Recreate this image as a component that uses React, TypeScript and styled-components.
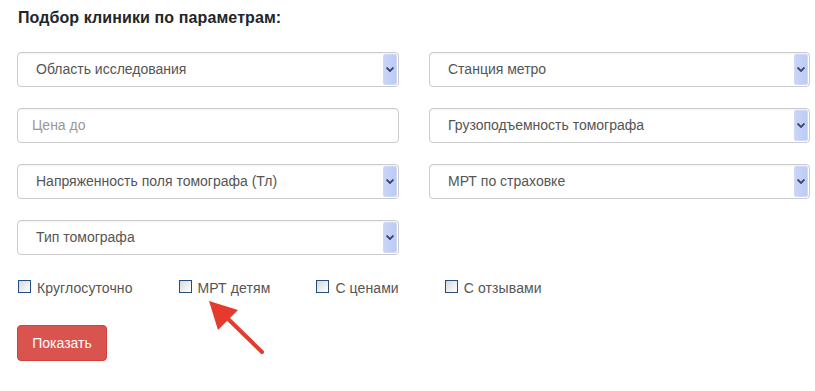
import styled, { createGlobalStyle } from 'styled-components'

const GlobalStyle = createGlobalStyle`
  html, body {
    margin: 0;
    padding: 0;
    background: #ffffff;
  }
  body {
    font-family: "Liberation Sans", Arial, sans-serif;
  }
`

const leftFields = [
  { label: 'Область исследования', kind: 'select' },
  { label: 'Станция метро', kind: 'select' },
  { label: 'Цена до', kind: 'input' },
  { label: 'Грузоподъемность томографа', kind: 'select' },
  { label: 'Напряженность поля томографа (Тл)', kind: 'select' },
  { label: 'МРТ по страховке', kind: 'select' },
  { label: 'Тип томографа', kind: 'select' },
]

const options = ['Круглосуточно', 'МРТ детям', 'С ценами', 'С отзывами']

// ─── Component ────────────────────────────────────────────────────────────────

export default function App() {
  return (
    <>
      <GlobalStyle />
      <Page>
        <Title>Подбор клиники по параметрам:</Title>

        <FieldGrid>
          {leftFields.map((f) =>
            f.kind === 'input' ? (
              <TextField key={f.label}>{f.label}</TextField>
            ) : (
              <SelectBox key={f.label}>
                <SelectText>{f.label}</SelectText>
                <ArrowButton>
                  <svg width="8" height="5" viewBox="0 0 8 5">
                    <path d="M0.5 0.5 L4 4 L7.5 0.5" fill="none" stroke="#3a4666" strokeWidth="1.8" />
                  </svg>
                </ArrowButton>
              </SelectBox>
            )
          )}
        </FieldGrid>

        <CheckRow>
          {options.map((o) => (
            <CheckItem key={o}>
              <CheckBox />
              <CheckLabel>{o}</CheckLabel>
            </CheckItem>
          ))}
        </CheckRow>

        <ShowButton>Показать</ShowButton>

        <Pointer width="70" height="65" viewBox="0 0 70 65">
          <line x1="62" y1="57" x2="22" y2="18" stroke="#e53b2f" strokeWidth="4" strokeLinecap="round" />
          <polygon points="9,6 38,15 18,35" fill="#e53b2f" />
        </Pointer>
      </Page>
    </>
  )
}

// ─── Styles ───────────────────────────────────────────────────────────────────

const Page = styled.div`
  position: relative;
  width: 793px;
  padding: 8px 0 30px 17px;
  color: #555555;
`

const Title = styled.h3`
  margin: 0 0 24px 1px;
  font-size: 16px;
  line-height: 20px;
  font-weight: bold;
  letter-spacing: 0.1px;
  color: #222629;
`

const FieldGrid = styled.div`
  display: grid;
  grid-template-columns: 382px 381px;
  column-gap: 30px;
  row-gap: 21px;
`

const fieldBase = `
  box-sizing: border-box;
  height: 35px;
  border: 1px solid #cccccc;
  border-radius: 4px;
  background: #ffffff;
  font-size: 14px;
  box-shadow: inset 0 1px 1px rgba(0, 0, 0, 0.05);
`

const SelectBox = styled.div`
  ${fieldBase}
  display: flex;
  align-items: stretch;
  padding: 1px 1px 1px 18px;
  color: #555555;
`

const SelectText = styled.span`
  flex: 1;
  display: flex;
  align-items: center;
  padding-bottom: 1px;
`

const ArrowButton = styled.span`
  box-sizing: border-box;
  width: 14px;
  display: flex;
  align-items: center;
  justify-content: center;
  background: linear-gradient(to right, #c9d5f8, #bccbf6);
  border: 1px solid #cfdaf9;
  border-radius: 2px;
`

const TextField = styled.div`
  ${fieldBase}
  display: flex;
  align-items: center;
  padding-left: 14px;
  padding-bottom: 1px;
  color: #999999;
`

const CheckRow = styled.div`
  display: flex;
  align-items: center;
  gap: 46px;
  margin-top: 23px;
  margin-left: 1px;
`

const CheckItem = styled.label`
  display: flex;
  align-items: center;
  gap: 6px;
  height: 20px;
`

const CheckBox = styled.span`
  box-sizing: border-box;
  width: 13px;
  height: 13px;
  border: 1.5px solid #234f80;
  background: linear-gradient(135deg, #d8d8d8, #ffffff);
  margin-top: -3px;
`

const CheckLabel = styled.span`
  font-size: 14px;
  letter-spacing: 0.1px;
  color: #555555;
`

const ShowButton = styled.button`
  display: block;
  margin-top: 27px;
  width: 90px;
  height: 36px;
  padding: 0;
  border: 1px solid #d43f3a;
  border-radius: 4px;
  background: #d9534f;
  color: #ffffff;
  font-family: "Liberation Sans", Arial, sans-serif;
  font-size: 14px;
`

const Pointer = styled.svg`
  position: absolute;
  left: 200px;
  top: 295px;
`
